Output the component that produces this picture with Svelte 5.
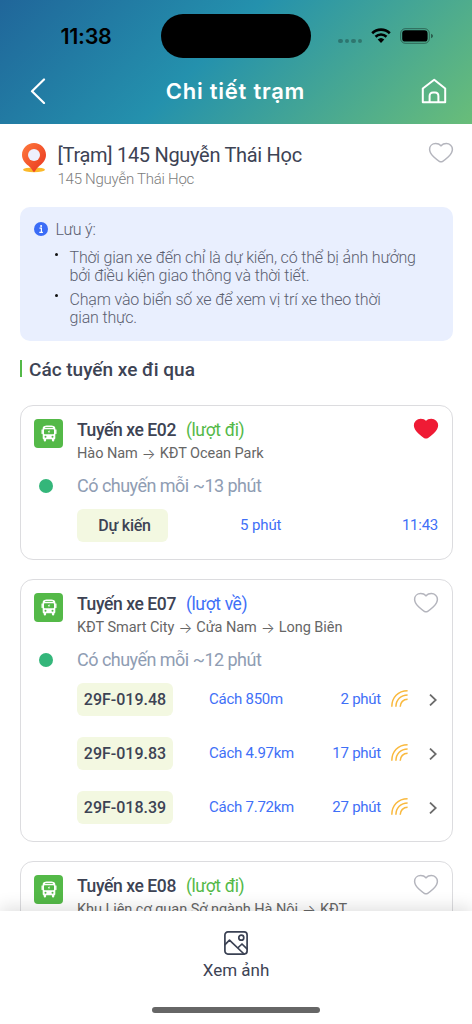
<script lang="ts">
	type Vehicle = {
		plate: string;
		distance: string;
		eta: string;
	};

	type Route = {
		code: string;
		direction: "go" | "back";
		stops: string[];
		interval?: number;
		favorite?: boolean;
		expected?: { eta: string; time: string };
		vehicles?: Vehicle[];
	};

	const notes = [
		["Thời gian xe đến chỉ là dự kiến, có thể bị ảnh hưởng", "bởi điều kiện giao thông và thời tiết."],
		["Chạm vào biển số xe để xem vị trí xe theo thời", "gian thực."],
	];

	const routes: Route[] = [
		{
			code: "E02",
			direction: "go",
			stops: ["Hào Nam", "KĐT Ocean Park"],
			interval: 13,
			favorite: true,
			expected: { eta: "5 phút", time: "11:43" },
		},
		{
			code: "E07",
			direction: "back",
			stops: ["KĐT Smart City", "Cửa Nam", "Long Biên"],
			interval: 12,
			vehicles: [
				{ plate: "29F-019.48", distance: "Cách 850m", eta: "2 phút" },
				{ plate: "29F-019.83", distance: "Cách 4.97km", eta: "17 phút" },
				{ plate: "29F-018.39", distance: "Cách 7.72km", eta: "27 phút" },
			],
		},
		{
			code: "E08",
			direction: "go",
			stops: ["Khu Liên cơ quan Sở ngành Hà Nội", "KĐT"],
		},
	];
</script>

{#snippet heart(filled: boolean)}
	<svg class="heart" class:filled viewBox="0 0 26 22" width="26" height="22" aria-hidden="true">
		<path d="M13 3.800C11.600 2.300 9.700 1.600 7.700 1.600 4.200 1.600 1.600 4 1.600 7.300c0 2.900 1.700 5.300 4 7.500 1.700 1.600 3.700 3.300 5.700 4.500 1.200.7 2.200.7 3.400 0 2-1.200 4-2.900 5.700-4.500 2.300-2.200 4-4.600 4-7.500 0-3.300-2.600-5.700-6.100-5.700-2 0-3.900.7-5.300 2.200z" />
	</svg>
{/snippet}

<div class="screen">
	<header>
		<div class="status">
			<span class="clock">11:38</span>
			<div class="island"></div>
			<div class="indicators">
				<span class="dots"><i></i><i></i><i></i><i></i></span>
				<svg viewBox="0 0 20 16" width="20" height="16" aria-hidden="true">
					<path d="M1.200 5.200a12.600 12.600 0 0 1 17.600 0M4.500 8.800a7.900 7.900 0 0 1 11 0" fill="none" stroke="#000" stroke-width="2.600" />
					<path d="M6.700 11.600a4.800 4.800 0 0 1 6.600 0L10 15z" />
				</svg>
				<svg class="battery" viewBox="0 0 33 16" width="33" height="16" aria-hidden="true">
					<rect x=".7" y=".7" width="28.600" height="14.600" rx="4.600" fill="none" stroke="#000" stroke-opacity=".4" />
					<rect x="2.200" y="2.200" width="25.400" height="11.400" rx="3.200" />
					<path d="M31 5.800c1.400.5 2 1.200 2 2.200s-.6 1.700-2 2.200z" opacity=".45" />
				</svg>
			</div>
		</div>
		<div class="navbar">
			<svg viewBox="0 0 16 26" width="16" height="26" aria-hidden="true">
				<path d="M14 1.500 2 13.200 14 25" fill="none" stroke="#fff" stroke-width="2.200" stroke-linecap="round" stroke-linejoin="round" />
			</svg>
			<h1>Chi tiết trạm</h1>
			<svg viewBox="0 0 26 26" width="26" height="26" aria-hidden="true">
				<path d="M1.800 24.300V10.500L13.200 1.800l11 8.700v13.800zM8.600 24v-6c0-2.200 1.400-3.600 3.400-3.600h2c2 0 3.400 1.400 3.400 3.600v6" fill="none" stroke="#fff" stroke-width="2" stroke-linejoin="round" />
			</svg>
		</div>
	</header>

	<main>
		<section class="station">
			<svg class="pin" viewBox="0 0 24 30" width="24" height="30" aria-hidden="true">
				<defs>
					<linearGradient id="pinFill" x1="0" y1="0" x2="1" y2="1">
						<stop offset="0" stop-color="#ff7a3c" />
						<stop offset="1" stop-color="#e8341f" />
					</linearGradient>
				</defs>
				<ellipse cx="12" cy="26.800" rx="11" ry="2.400" fill="#fbb92a" />
				<path d="M12 0C5.400 0 0 5.200 0 11.700c0 4.600 2.700 8.300 6.500 11 1.800 1.400 3.300 3.500 4.500 5.600.5.900 1.500.9 2 0 1.200-2.100 2.700-4.200 4.500-5.600 3.800-2.700 6.500-6.400 6.500-11C24 5.200 18.600 0 12 0z" fill="url(#pinFill)" />
				<circle cx="12" cy="12" r="6" fill="#eef0fd" />
			</svg>
			<div class="station-text">
				<h2>[Trạm] 145 Nguyễn Thái Học</h2>
				<p>145 Nguyễn Thái Học</p>
			</div>
			{@render heart(false)}
		</section>

		<section class="notice">
			<div class="notice-head">
				<svg viewBox="0 0 14 14" width="14" height="14" aria-hidden="true">
					<circle cx="7" cy="7" r="7" fill="#3b6cf6" />
					<circle cx="7.100" cy="3.900" r="1" fill="#fff" />
					<path d="M5.500 6.200h1.900v4.200M5.300 10.400h3.600" fill="none" stroke="#fff" stroke-width="1.200" />
				</svg>
				<span>Lưu ý:</span>
			</div>
			<ul>
				{#each notes as lines}
					<li>
						{#each lines as line}
							<span>{line}</span>
						{/each}
					</li>
				{/each}
			</ul>
		</section>

		<h3>Các tuyến xe đi qua</h3>

		<div class="routes">
			{#each routes as route}
				<article class="card">
					<div class="card-head">
						<span class="bus">
							<svg viewBox="0 0 16 17" width="16" height="17" aria-hidden="true">
								<path d="M3.500.9C5.500.3 10.500.3 12.500.9c1.200.4 1.800 1.200 1.800 2.400V13c0 .8-.4 1.300-1 1.300v1a1.200 1.200 0 0 1-2.400 0v-1H5.100v1a1.200 1.200 0 0 1-2.400 0v-1c-.6 0-1-.5-1-1.300V3.300c0-1.200.6-2 1.800-2.400z" fill="#fff" />
								<path d="M1.200 5v3.500M14.800 5v3.500" stroke="#fff" stroke-width="1.400" stroke-linecap="round" />
								<path d="M4.200 2.500h7.600" stroke="#54b948" stroke-width=".8" />
								<rect x="3" y="4.300" width="10" height="4.900" rx=".7" fill="#54b948" />
								<path d="m8.500 4.900-1.700 2.100h1l-.3 1.600 1.700-2.100h-1z" fill="#fff" />
								<circle cx="4.500" cy="11.700" r="1" fill="#54b948" />
								<circle cx="11.500" cy="11.700" r="1" fill="#54b948" />
							</svg>
						</span>
						<div class="card-title">
							<p class="name">
								Tuyến xe {route.code}
								<span class={route.direction}>({route.direction === "go" ? "lượt đi" : "lượt về"})</span>
							</p>
							<p class="stops">
								{#each route.stops as stop, i}
									{#if i > 0}<span class="arrow">→</span>{/if}<span>{stop}</span>
								{/each}
							</p>
						</div>
						{@render heart(route.favorite ?? false)}
					</div>

					{#if route.interval}
						<div class="interval">
							<span class="dot"></span>
							<span>Có chuyến mỗi ~{route.interval} phút</span>
						</div>
					{/if}

					<div class="trips">
						{#if route.expected}
							<div class="trip">
								<span class="chip expected">Dự kiến</span>
								<span class="eta-mid">{route.expected.eta}</span>
								<span class="time">{route.expected.time}</span>
							</div>
						{/if}
						{#each route.vehicles ?? [] as vehicle}
							<div class="trip">
								<span class="chip">{vehicle.plate}</span>
								<span class="distance">{vehicle.distance}</span>
								<span class="eta">{vehicle.eta}</span>
								<svg class="signal" viewBox="0 0 17 17" width="17" height="17" aria-hidden="true">
									<path d="M.8 16.800C.8 7.500 7 .8 16.600.8M4.900 16.800C4.900 9.800 9.800 4.900 16.600 4.900M9.200 16.800c0-4.300 3.200-7.600 7.400-7.600" fill="none" stroke="#f9b93e" stroke-width="1.500" />
								</svg>
								<svg class="chevron" viewBox="0 0 8 12" width="8" height="12" aria-hidden="true">
									<path d="m1 .6 5.800 5.400L1 11.400" fill="none" stroke="#6b6b6b" stroke-width="1.800" />
								</svg>
							</div>
						{/each}
					</div>
				</article>
			{/each}
		</div>
	</main>

	<footer>
		<svg viewBox="0 0 24 24" width="24" height="24" fill="none" stroke="#3a4153" stroke-width="1.700" stroke-linecap="round" stroke-linejoin="round" aria-hidden="true">
			<rect x=".9" y=".9" width="22.200" height="22.200" rx="3" />
			<circle cx="17.300" cy="6.700" r="2.500" />
			<path d="M1 13.600 5.500 9.200 20 23M13.700 17l4.300-4 5 4.800" />
		</svg>
		<span>Xem ảnh</span>
		<div class="home-indicator"></div>
	</footer>
</div>

<style>
	:global(body) {
		margin: 0;
		background: #fff;
	}

	.screen {
		display: flex;
		flex-direction: column;
		width: 472px;
		height: 1024px;
		overflow: hidden;
		background: #fff;
		color: #3d4354;
		font-family: Roboto, "Noto Sans", sans-serif;
		white-space: nowrap;
	}

	h1,
	h2,
	h3,
	p,
	ul {
		margin: 0;
		padding: 0;
	}

	svg {
		display: block;
		flex-shrink: 0;
	}

	header {
		flex: none;
		height: 124px;
		background: linear-gradient(135deg, #20669a 0%, #2491ad 44%, #69bd79 100%);
	}

	.status {
		display: grid;
		grid-template-columns: 161px 150px 1fr;
		align-items: center;
		padding-top: 14px;
		height: 44px;
	}

	.clock {
		padding-left: 60.500px;
		color: #000;
		font: 600 21.500px/44px Inter, sans-serif;
		letter-spacing: -0.3px;
	}

	.island {
		height: 44px;
		border-radius: 22px;
		background: #000;
	}

	.indicators {
		display: flex;
		align-items: center;
		padding-left: 27px;
		height: 44px;
	}

	.dots {
		display: flex;
		gap: 2px;
		margin: 10px 9px 0 0;
	}

	.dots i {
		width: 4.500px;
		height: 4.500px;
		border-radius: 50%;
		background: rgba(0, 0, 0, 0.27);
	}

	.battery {
		margin-left: 9px;
	}

	.navbar {
		display: flex;
		align-items: center;
		justify-content: space-between;
		padding: 0 25px 0 30px;
		height: 66px;
	}

	h1 {
		padding-left: 4px;
		color: #fff;
		font: 600 22px/30px Inter, "Open Sans", sans-serif;
		letter-spacing: 0.75px;
	}

	main {
		flex: 1;
		min-height: 0;
		overflow: hidden;
		padding: 0 19.500px;
	}

	.station {
		display: flex;
		align-items: flex-start;
		padding: 18px 0 0 2px;
		height: 65px;
	}

	.pin {
		margin-top: 1px;
	}

	.station-text {
		flex: 1;
		padding-left: 12px;
	}

	h2 {
		font-size: 20px;
		font-weight: 400;
		line-height: 26px;
		letter-spacing: -0.3px;
	}

	.station-text p {
		color: #7c7c7c;
		font-size: 15px;
		font-weight: 300;
		line-height: 22px;
		letter-spacing: -0.25px;
	}

	.station .heart {
		margin-right: -1px;
	}

	.card .heart {
		margin: -1px -1px 0 0;
	}

	.heart path {
		fill: none;
		stroke: #b4b5bd;
		stroke-width: 1.500;
	}

	.heart.filled path {
		fill: #ef1b35;
		stroke: #ef1b35;
	}

	.notice {
		box-sizing: border-box;
		height: 134px;
		padding: 12px 14px;
		border-radius: 10px;
		background: #e9effe;
		color: #5b6070;
		font-size: 16px;
		font-weight: 300;
		letter-spacing: -0.17px;
	}

	.notice-head {
		display: flex;
		align-items: center;
		gap: 8px;
		height: 20px;
	}

	ul {
		display: flex;
		flex-direction: column;
		gap: 5px;
		padding: 10px 0 0 21px;
		list-style: none;
	}

	li {
		display: flex;
		flex-direction: column;
		position: relative;
		padding-left: 15px;
		line-height: 18.300px;
	}

	li::before {
		content: "";
		position: absolute;
		top: 3.500px;
		left: 0;
		width: 3px;
		height: 3px;
		border-radius: 50%;
		background: #111;
	}

	h3 {
		display: flex;
		align-items: center;
		gap: 7px;
		padding-top: 17px;
		font-size: 19px;
		font-weight: 500;
		line-height: 24px;
	}

	h3::before {
		content: "";
		width: 2.500px;
		height: 17px;
		margin-top: -3px;
		background: #54b948;
	}

	.routes {
		display: flex;
		flex-direction: column;
		gap: 19px;
		padding-top: 23px;
	}

	.card {
		padding: 13px 13.500px 17px;
		border: 1px solid #dcdcdf;
		border-radius: 13px;
	}

	.card-head {
		display: flex;
		align-items: flex-start;
	}

	.bus {
		display: grid;
		place-items: center;
		width: 29px;
		height: 29px;
		border-radius: 4px;
		background: #54b948;
	}

	.card-title {
		flex: 1;
		padding-left: 14px;
	}

	.name {
		font-size: 17.500px;
		font-weight: 500;
		line-height: 22px;
		letter-spacing: -0.4px;
	}

	.name span {
		margin-left: 6px;
		font-weight: 400;
	}

	.go {
		color: #54b948;
	}

	.back {
		color: #3f70f7;
	}

	.stops {
		display: flex;
		padding-top: 1px;
		color: #666;
		font-size: 14.500px;
		line-height: 23px;
		letter-spacing: -0.05px;
	}

	.arrow {
		display: flex;
		justify-content: center;
		width: 22px;
		font-family: Inter, sans-serif;
		font-size: 14.500px;
		font-weight: 300;
	}

	.interval {
		display: flex;
		align-items: center;
		gap: 24px;
		height: 42px;
		padding-left: 5px;
		color: #8f9db3;
		font-size: 18px;
		letter-spacing: -0.52px;
	}

	.interval span:last-child {
		margin-top: -2px;
	}

	.dot {
		width: 14px;
		height: 14px;
		border-radius: 50%;
		background: #34b67a;
	}

	.trips {
		display: flex;
		flex-direction: column;
		gap: 21px;
		padding: 2px 0 0 43px;
	}

	.trip {
		display: flex;
		align-items: center;
		height: 33px;
		color: #3f70f7;
		font-size: 15px;
		letter-spacing: -0.25px;
	}

	.chip {
		box-sizing: border-box;
		width: 96px;
		border-radius: 6px;
		background: #f3f8e1;
		color: #3d4354;
		font-size: 16px;
		font-weight: 500;
		line-height: 33px;
		letter-spacing: 0;
		text-align: center;
	}

	.chip.expected {
		width: 91px;
		padding-left: 4px;
		letter-spacing: -0.25px;
	}

	.eta-mid,
	.time,
	.distance,
	.eta {
		margin-bottom: 1px;
	}

	.eta-mid {
		margin-left: 72px;
		letter-spacing: -0.1px;
	}

	.time {
		margin-left: auto;
	}

	.distance {
		margin-left: 36px;
	}

	.eta {
		margin-left: auto;
	}

	.signal {
		margin: 0 0 2px 10px;
	}

	.chevron {
		margin: 0 1px 0 21px;
	}

	footer {
		position: relative;
		flex: none;
		display: flex;
		flex-direction: column;
		align-items: center;
		box-sizing: border-box;
		height: 113px;
		padding-top: 20px;
		background: #fff;
		box-shadow: 0 -4px 16px rgba(0, 0, 0, 0.12);
		font-size: 17px;
	}

	footer span {
		margin-top: 3px;
		line-height: 24px;
	}

	.home-indicator {
		width: 168px;
		height: 6px;
		margin-top: 25px;
		border-radius: 3px;
		background: #666;
	}
</style>
